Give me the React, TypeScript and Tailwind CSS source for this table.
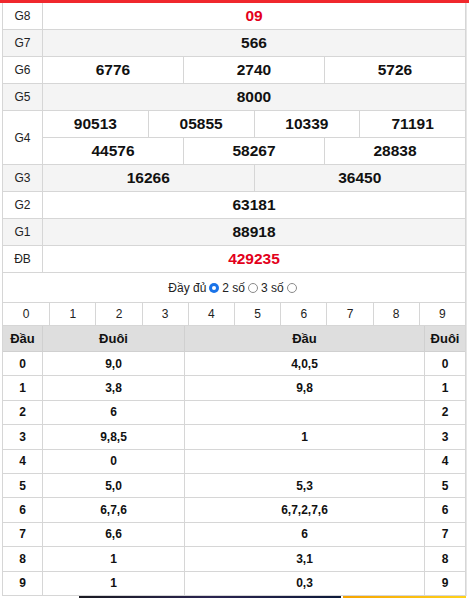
import React from 'react'

const font = { fontFamily: '"Liberation Sans", Arial, sans-serif' }

type Prize = { label: string; rows: string[][]; red?: boolean }

const prizes: Prize[] = [
    { label: 'G8', rows: [['09']], red: true },
    { label: 'G7', rows: [['566']] },
    { label: 'G6', rows: [['6776', '2740', '5726']] },
    { label: 'G5', rows: [['8000']] },
    { label: 'G4', rows: [['90513', '05855', '10339', '71191'], ['44576', '58267', '28838']] },
    { label: 'G3', rows: [['16266', '36450']] },
    { label: 'G2', rows: [['63181']] },
    { label: 'G1', rows: [['88918']] },
    { label: 'ĐB', rows: [['429235']], red: true },
]

const loto = [
    { n: '0', duoi: '9,0', dau: '4,0,5' },
    { n: '1', duoi: '3,8', dau: '9,8' },
    { n: '2', duoi: '6', dau: '' },
    { n: '3', duoi: '9,8,5', dau: '1' },
    { n: '4', duoi: '0', dau: '' },
    { n: '5', duoi: '5,0', dau: '5,3' },
    { n: '6', duoi: '6,7,6', dau: '6,7,2,7,6' },
    { n: '7', duoi: '6,6', dau: '6' },
    { n: '8', duoi: '1', dau: '3,1' },
    { n: '9', duoi: '1', dau: '0,3' },
]

function PrizeRow({ prize, idx }: { prize: Prize; idx: number }) {
    const bg = idx % 2 === 1 ? 'bg-[#f4f4f4]' : 'bg-white'
    return (
        <div className={`flex border-b border-[#d6d6d6] ${bg}`}>
            <div className="w-[40px] shrink-0 flex items-center justify-center border-r border-[#d6d6d6] text-[12px] text-[#222]">
                {prize.label}
            </div>
            <div className="flex-1 flex flex-col">
                {prize.rows.map((cells, r) => (
                    <div key={r} className={`flex h-[26px] ${r > 0 ? 'h-[27px] border-t border-[#d6d6d6]' : ''}`}>
                        {cells.map((c, i) => (
                            <div
                                key={i}
                                className={`flex-1 flex items-center justify-center text-[15.5px] font-bold ${i > 0 ? 'border-l border-[#d6d6d6]' : ''} ${prize.red ? 'text-[#e3001b]' : 'text-[#111]'}`}
                            >
                                {c}
                            </div>
                        ))}
                    </div>
                ))}
            </div>
        </div>
    )
}

function Radio({ checked }: { checked?: boolean }) {
    return checked ? (
        <span className="inline-flex items-center justify-center w-[10px] h-[10px] rounded-full bg-[#1a73e8] mx-[3px]">
            <span className="w-[4px] h-[4px] rounded-full bg-white" />
        </span>
    ) : (
        <span className="inline-block w-[10px] h-[10px] rounded-full border border-[#8a8a8a] bg-white mx-[3px]" />
    )
}

export default function App() {
    return (
        <div className="w-[469px] h-[598px] bg-white overflow-hidden" style={font}>
            <div className="h-[3px] bg-[#f0282d]" />
            <div className="ml-[2px] mr-[3px] border-l border-r border-[#d6d6d6] shadow-[1px_0_0_#e6e6e6]">
                {prizes.map((p, i) => (
                    <PrizeRow key={p.label} prize={p} idx={i} />
                ))}
                <div className="h-[30px] flex items-center justify-center text-[12px] text-[#222] border-b border-[#d6d6d6]">
                    <span>Đầy đủ</span>
                    <Radio checked />
                    <span>2 số</span>
                    <Radio />
                    <span>3 số</span>
                    <Radio />
                </div>
                <div className="grid grid-cols-10 h-[23px] border-b border-[#d6d6d6]">
                    {Array.from({ length: 10 }, (_, i) => (
                        <div
                            key={i}
                            className={`flex items-center justify-center text-[12px] text-[#222] ${i > 0 ? 'border-l border-[#d6d6d6]' : ''}`}
                        >
                            {i}
                        </div>
                    ))}
                </div>
                <div className="flex h-[26px] bg-[#dedede] border-b border-[#d0d0d0] text-[13px] font-bold text-[#111]">
                    <div className="w-[40px] flex items-center justify-center border-r border-[#d0d0d0]">Đầu</div>
                    <div className="w-[142px] flex items-center justify-center border-r border-[#d0d0d0]">Đuôi</div>
                    <div className="flex-1 flex items-center justify-center border-r border-[#d0d0d0]">Đầu</div>
                    <div className="w-[40px] flex items-center justify-center">Đuôi</div>
                </div>
                {loto.map(r => (
                    <div key={r.n} className="flex h-[24.4px] border-b border-[#d6d6d6] text-[12px] font-bold text-[#111]">
                        <div className="w-[40px] flex items-center justify-center border-r border-[#d6d6d6]">{r.n}</div>
                        <div className="w-[142px] flex items-center justify-center border-r border-[#d6d6d6]">{r.duoi}</div>
                        <div className="flex-1 flex items-center justify-center border-r border-[#d6d6d6]">{r.dau}</div>
                        <div className="w-[40px] flex items-center justify-center">{r.n}</div>
                    </div>
                ))}
            </div>
            <div className="flex h-[6px]">
                <div className="w-[79px]" />
                <div className="w-[262px] bg-gradient-to-r from-[#1a1a22] via-[#2a2450] to-[#0d1a3a]" />
                <div className="w-[2px]" />
                <div className="w-[123px] bg-gradient-to-r from-[#f5a300] to-[#ffd21a]" />
            </div>
        </div>
    )
}
